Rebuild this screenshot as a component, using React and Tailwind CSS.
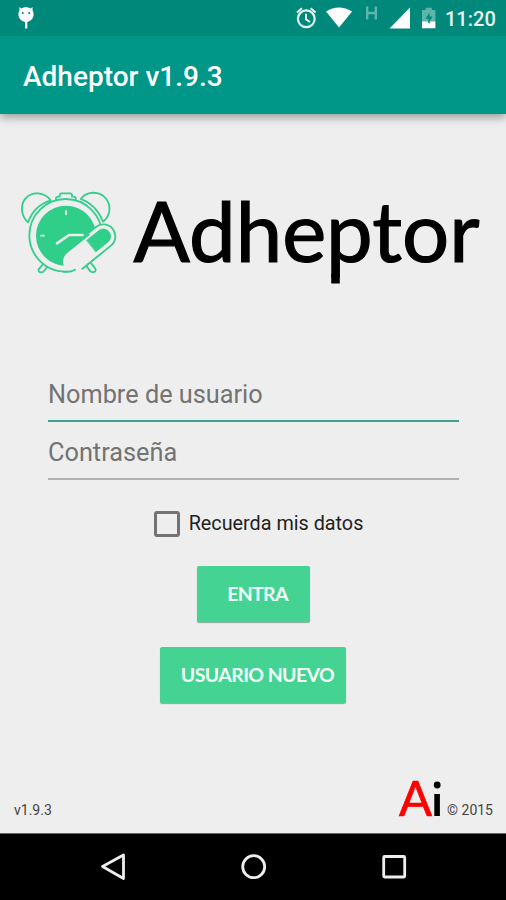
function DroidIcon() {
  return (
    <svg className="ml-[17px] h-[25px] w-[18px]" viewBox="0 0 18 25" fill="#fff">
      <path d="M2.5 1 4.4 2.5A8 8 0 0 1 13.6 2.5L15.5 1 15.6 4.4C18 8.5 16.2 14.5 10.3 16V22.5H8V16C1.8 14.5 0 8.5 2.4 4.4Z" />
      <circle cx="5.8" cy="7" r="1" fill="#00897b" />
      <circle cx="12.2" cy="7" r="1" fill="#00897b" />
    </svg>
  );
}

function StatusIcons() {
  return (
    <svg className="h-[36px] w-[150px]" viewBox="290 0 150 36" fill="none">
      <g stroke="#e4f3f1" strokeWidth="2.2">
        <circle cx="306.3" cy="18.8" r="8.4" />
        <path d="M306 13.8v5.6l4 2.6M297 12.5l5-4.2M315.6 12.5l-5-4.2" strokeWidth="2" />
      </g>
      <path d="M326 11.5Q339 3.5 352 11.5L339 27.5Z" fill="#fff" />
      <path d="M367.2 6.5v13M375.8 6.5v13M367.2 13h8.6" stroke="#5fb5ab" strokeWidth="2.4" />
      <path d="M410 7.5V28.5H389.5Z" fill="#fff" />
      <path d="M422 10h3.6V7.8h6.2V10h3.6V22H422Z" fill="#5fb5ab" />
      <path d="M422 21.5h5.5l1.5 2 2-2h4.4v6.8H422Z" fill="#fff" />
      <path d="M429.6 12.5l-4.2 6.2h3v4l4.4-6.2h-3.2Z" fill="#00897b" />
    </svg>
  );
}

function ClockLogo() {
  return (
    <svg className="h-[105px] w-[120px] shrink-0" viewBox="0 0 360 315" fill="none" stroke="#35ce8d" strokeWidth="5.5" strokeLinejoin="round" strokeLinecap="round">
      <path d="M54 127C33 108 30 76 46 56C66 32 104 36 122 61C90 71 67 91 54 127Z" />
      <path d="M279 125C300 110 305 79 289 57C270 32 230 32 212 57C243 68 266 91 279 125Z" />
      <path d="M138 61V55Q138 50 146 50H149V45Q149 40 155 40H180Q186 40 186 45V50H189Q197 50 197 55V61" />
      <path d="M101 250 86 268Q84 276 92 277L99 276 114 258M230 259 241 274 249 277Q260 274 256 266L243 249" />
      <circle cx="167" cy="166" r="109" fill="#eeeeee" />
      <circle cx="168" cy="167" r="90" fill="#2fce89" stroke="none" />
      <path d="M168 93v10M93 167h9" stroke="#eeeeee" />
      <path d="M218 165H177L141 190" stroke="#eeeeee" strokeWidth="8" />
      <g transform="translate(280 169) rotate(-39)">
        <path d="M-28 -36H0A36 36 0 0 1 0 36H-110V20H-28Z" fill="#eeeeee" stroke="none" />
        <rect x="-149" y="-29" width="183" height="64" rx="32" fill="#eeeeee" stroke="none" />
        <path d="M-44 -36H0A36 36 0 0 1 0 36H-110" />
        <path d="M-46 -22H0A22 22 0 0 1 0 22H-46Z" fill="#2fce89" stroke="#2fce89" strokeWidth="2" />
      </g>
      <path d="M159 275Q180 278 195 269" />
    </svg>
  );
}

export default function App() {
  return (
    <div className="flex h-[900px] w-[506px] flex-col overflow-hidden bg-[#eeeeee] font-['Roboto',sans-serif] text-black">
      <header className="shrink-0 shadow-[0_3px_9px_rgba(0,0,0,0.38)]">
        <div className="flex h-[36px] items-center justify-between bg-[#00897b] pr-[11px]">
          <DroidIcon />
          <div className="flex items-center gap-[5px]">
            <StatusIcons />
            <span className="w-[50px] whitespace-nowrap pt-[2px] text-[20px] font-medium leading-none text-[#e9f6f4]">11:20</span>
          </div>
        </div>
        <div className="flex h-[78px] items-center bg-[#009688] pl-[23px] pt-[3px]">
          <h1 className="text-[28px] font-medium leading-none text-white">Adheptor v1.9.3</h1>
        </div>
      </header>

      <main className="flex h-[719px] shrink-0 flex-col">
        <div className="mt-[66px] flex h-[110px] pl-[10px]">
          <ClockLogo />
          <svg className="h-[110px] w-[370px] shrink-0" viewBox="130 180 370 110">
            <text x="133.5" y="262" textLength="346" lengthAdjust="spacingAndGlyphs" fontSize="84" fontWeight="400" stroke="#000" strokeWidth="1.2" className="font-['Lato',sans-serif]">Adheptor</text>
            <path d="M331.2 274h8.6v9.5h-8.6Z" />
          </svg>
        </div>

        <form className="flex flex-col items-center">
          <div className="mt-[75px] flex h-[57px] w-[411px] items-center border-b-[2px] border-[#3da093] pl-[0.5px] pt-[4px] text-[25.3px] text-[#737373]">Nombre de usuario</div>
          <div className="flex h-[58px] w-[411px] items-center border-b-[2px] border-[#b2b2b2] pl-[0.5px] pt-[6px] text-[25.3px] text-[#737373]">Contraseña</div>
          <label className="ml-[11px] mt-[30px] flex h-[27px] items-center gap-[9px] text-[19.8px] text-[#222]">
            <span className="h-[26px] w-[26px] rounded-[3px] border-[3px] border-[#737373]" />
            Recuerda mis datos
          </label>
          <button type="button" className="mt-[29px] h-[56px] w-[113px] rounded-[2px] bg-[#45d393] pl-[9px] font-['Lato',sans-serif] text-[19.5px] font-bold tracking-[-0.7px] text-[#effff7] shadow-[0_1px_1px_rgba(0,90,55,0.45)]">ENTRA</button>
          <button type="button" className="mt-[25px] h-[56px] w-[186px] whitespace-nowrap rounded-[2px] bg-[#45d393] pl-[9px] font-['Lato',sans-serif] text-[19.5px] font-bold tracking-[-0.6px] text-[#effff7] shadow-[0_1px_1px_rgba(0,90,55,0.45)]">USUARIO NUEVO</button>
        </form>

        <footer className="mt-auto flex items-end justify-between pb-[13px] pl-[14px] pr-[13px] text-[14px] leading-[19px] text-[#444]">
          <span>v1.9.3</span>
          <div className="flex items-end gap-[5px]">
            <svg className="mb-[-10px] h-[80px] w-[46px]" viewBox="396 756 46 80">
              <text x="399" y="822" textLength="33" lengthAdjust="spacingAndGlyphs" fontSize="48" fontWeight="400" fill="#f00" stroke="#f00" strokeWidth="0.7" className="font-['Lato',sans-serif]">A</text>
              <path d="M434.3 800h5.6v22h-5.6Z" />
              <circle cx="437.2" cy="791" r="3.4" />
            </svg>
            <span>© 2015</span>
          </div>
        </footer>
      </main>

      <nav className="h-[67px] shrink-0 border-t border-[#606968] bg-black">
        <svg className="h-[66px] w-[506px]" viewBox="0 834 506 66" fill="none" stroke="#eee" strokeWidth="2.8" strokeLinejoin="round">
          <path d="M102.5 866.5 123.5 855V878.5Z" />
          <circle cx="253.7" cy="866.7" r="11" />
          <rect x="383.7" y="856.5" width="21" height="20.5" rx="1" />
        </svg>
      </nav>
    </div>
  );
}
